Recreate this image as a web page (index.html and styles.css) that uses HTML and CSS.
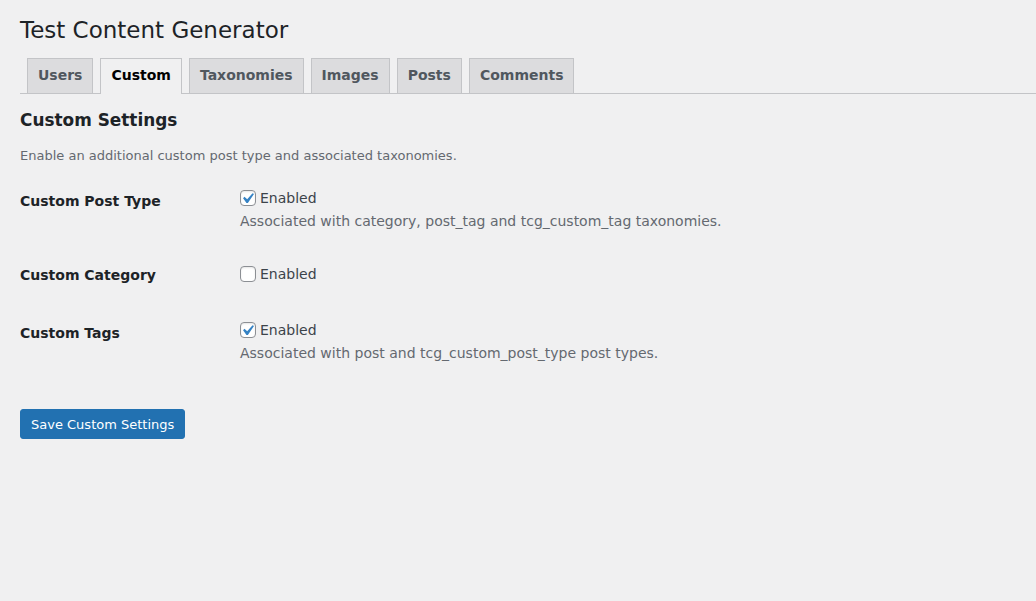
FILE: index.html
```html
<!DOCTYPE html>
<html lang="en">
<head>
<meta charset="utf-8">
<title>Test Content Generator</title>
<link rel="stylesheet" href="styles.css">
</head>
<body>
<div class="wrap">
  <h1 class="page-title">Test Content Generator</h1>
  <nav class="tabs">
    <a class="tab">Users</a>
    <a class="tab tab-active">Custom</a>
    <a class="tab">Taxonomies</a>
    <a class="tab">Images</a>
    <a class="tab">Posts</a>
    <a class="tab">Comments</a>
  </nav>

  <h2 class="section-title">Custom Settings</h2>
  <p class="section-desc">Enable an additional custom post type and associated taxonomies.</p>

  <div class="form-table">
    <div class="row">
      <div class="row-label">Custom Post Type</div>
      <div class="row-field">
        <label class="check-line">
          <span class="checkbox">
            <svg class="checkmark" viewBox="0 0 20 20" width="21" height="21"><path d="M14.83 4.89l1.34.94-5.81 8.38H9.02L5.78 9.67l1.34-1.25 2.57 2.4z" fill="#3582c4"/></svg>
          </span>
          <span>Enabled</span>
        </label>
        <p class="field-desc">Associated with category, post_tag and tcg_custom_tag taxonomies.</p>
      </div>
    </div>
    <div class="row">
      <div class="row-label">Custom Category</div>
      <div class="row-field">
        <label class="check-line">
          <span class="checkbox"></span>
          <span>Enabled</span>
        </label>
      </div>
    </div>
    <div class="row">
      <div class="row-label">Custom Tags</div>
      <div class="row-field">
        <label class="check-line">
          <span class="checkbox">
            <svg class="checkmark" viewBox="0 0 20 20" width="21" height="21"><path d="M14.83 4.89l1.34.94-5.81 8.38H9.02L5.78 9.67l1.34-1.25 2.57 2.4z" fill="#3582c4"/></svg>
          </span>
          <span>Enabled</span>
        </label>
        <p class="field-desc">Associated with post and tcg_custom_post_type post types.</p>
      </div>
    </div>
  </div>

  <div class="submit">
    <button class="button-primary" type="button">Save Custom Settings</button>
  </div>
</div>
</body>
</html>
```

FILE: styles.css
```css
html, body {
  margin: 0;
  padding: 0;
  background: #f0f0f1;
}
body {
  font-family: "DejaVu Sans", sans-serif;
  font-size: 13px;
  color: #3c434a;
}
.wrap {
  padding: 0 0 0 20px;
}
.page-title {
  margin: 0;
  padding: 15px 0 3px;
  font-size: 23px;
  font-weight: 400;
  line-height: 30px;
  color: #1d2327;
}
.tabs {
  display: flex;
  padding-top: 10px;
  border-bottom: 1px solid #c3c4c7;
}
.tab {
  display: block;
  margin-left: 7px;
  padding: 4px 10px 6px;
  border: 1px solid #c3c4c7;
  border-bottom: none;
  background: #dcdcde;
  color: #50575e;
  font-size: 14px;
  font-weight: 700;
  line-height: 24px;
  text-decoration: none;
}
.tab-active {
  background: #f0f0f1;
  color: #000;
  margin-bottom: -1px;
  padding-bottom: 7px;
}
.section-title {
  margin: 16px 0 0;
  font-size: 16.9px;
  font-weight: 700;
  line-height: 20px;
  color: #1d2327;
}
.section-desc {
  margin: 16px 0 0;
  font-size: 13px;
  line-height: 19.5px;
  color: #646970;
}
.form-table {
  margin-top: 5.5px;
}
.row {
  display: grid;
  grid-template-columns: 210px 1fr;
}
.row-label {
  padding: 21px 10px 19px 0;
  font-size: 14px;
  font-weight: 700;
  line-height: 18.2px;
  color: #1d2327;
}
.row-field {
  align-self: center;
  padding: 15px 10px;
  font-size: 14px;
  line-height: 18.2px;
}
.check-line {
  display: flex;
  align-items: center;
  height: 24px;
}
.checkbox {
  position: relative;
  box-sizing: border-box;
  width: 16px;
  height: 16px;
  margin-right: 4px;
  border: 1px solid #8c8f94;
  border-radius: 4px;
  background: #fff;
  box-shadow: inset 0 1px 2px rgba(0, 0, 0, 0.1);
  flex: none;
}
.checkmark {
  position: absolute;
  left: -4px;
  top: -3px;
}
.field-desc {
  margin: 2px 0 0;
  font-size: 14px;
  line-height: 18.2px;
  color: #646970;
}
.submit {
  display: flex;
  margin-top: 31px;
}
.button-primary {
  box-sizing: border-box;
  height: 30px;
  padding: 2px 10px 0;
  border: 1px solid #2271b1;
  border-radius: 3px;
  background: #2271b1;
  color: #fff;
  font-family: "DejaVu Sans", sans-serif;
  font-size: 13px;
  line-height: 26px;
  cursor: pointer;
}
```
